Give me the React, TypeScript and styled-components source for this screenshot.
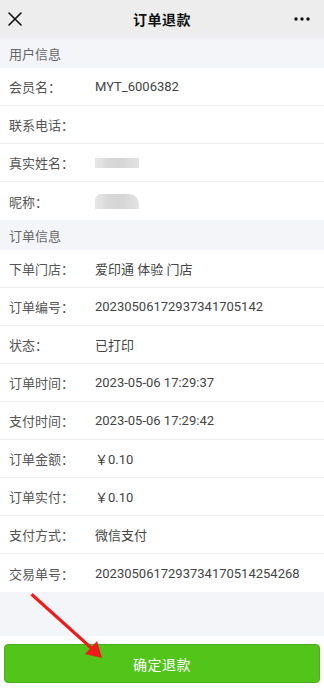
import React from "react";
import styled, { createGlobalStyle } from "styled-components";

const Global = createGlobalStyle`
  html, body { margin: 0; padding: 0; background: #ffffff; }
  body { font-family: "Noto Sans CJK SC", "Noto Sans", Roboto, sans-serif; }
  * { box-sizing: border-box; }
`;

const Page = styled.div`
  position: relative;
  width: 324px;
  height: 690px;
  display: flex;
  flex-direction: column;
  background: #fff;
  overflow: hidden;
`;

const NavBar = styled.div`
  height: 38px;
  background: #ededed;
  display: grid;
  grid-template-columns: 40px 1fr 40px;
  align-items: center;
`;

const NavIcon = styled.div<{ $align: "start" | "end" }>`
  display: flex;
  justify-content: ${(p) => (p.$align === "start" ? "flex-start" : "flex-end")};
  padding: ${(p) => (p.$align === "start" ? "0 0 0 8px" : "0 14px 0 0")};
  align-items: center;
`;

const NavTitle = styled.div`
  text-align: center;
  font-size: 14px;
  font-weight: 700;
  color: #111;
  letter-spacing: 0.5px;
`;

const SectionHeader = styled.div`
  height: 30px;
  background: #f4f5f9;
  color: #666;
  font-size: 13px;
  display: flex;
  align-items: center;
  padding-left: 9px;
`;

const Row = styled.div`
  height: 38px;
  display: flex;
  align-items: center;
  padding-left: 9px;
  font-size: 13px;
  border-bottom: 1px solid #eeeeee;
  &:last-child { border-bottom: none; }
`;

const Label = styled.span`
  width: 86px;
  color: #555;
  flex-shrink: 0;
`;

const Value = styled.span`
  color: #444;
  font-family: Roboto, "Noto Sans CJK SC", sans-serif;
`;

const Blur = styled.span<{ $tall?: boolean }>`
  display: inline-block;
  width: 44px;
  height: ${(p) => (p.$tall ? "15px" : "10px")};
  background: linear-gradient(90deg, #e4e4e4 0%, #d2d2d2 30%, #cfcfcf 60%, #dedede 100%);
  border-radius: ${(p) => (p.$tall ? "6px 10px 0 0" : "0")};
  filter: blur(0.6px);
  opacity: 0.85;
`;

const Spacer = styled.div`
  flex: 1;
  background: #f4f5f9;
`;

const Footer = styled.div`
  height: 54px;
  padding: 8px 4px 7px;
  background: #fff;
`;

const ConfirmButton = styled.button`
  width: 100%;
  height: 39px;
  border: 1px solid #4aae1c;
  border-radius: 4px;
  background: #52c41a;
  color: #fff;
  font-family: "Noto Sans CJK SC", sans-serif;
  font-size: 14px;
  letter-spacing: 0.5px;
`;

const ArrowOverlay = styled.svg`
  position: absolute;
  left: 0;
  top: 0;
  pointer-events: none;
`;

const userRows: [string, React.ReactNode][] = [
  ["会员名：", <Value>MYT_6006382</Value>],
  ["联系电话：", null],
  ["真实姓名：", <Blur />],
  ["昵称：", <Blur $tall />],
];

const orderRows: [string, string][] = [
  ["下单门店：", "爱印通 体验 门店"],
  ["订单编号：", "20230506172937341705142"],
  ["状态：", "已打印"],
  ["订单时间：", "2023-05-06 17:29:37"],
  ["支付时间：", "2023-05-06 17:29:42"],
  ["订单金额：", "￥0.10"],
  ["订单实付：", "￥0.10"],
  ["支付方式：", "微信支付"],
  ["交易单号：", "2023050617293734170514254268"],
];

const Section = styled.div`
  display: flex;
  flex-direction: column;
`;

export default function App() {
  return (
    <>
      <Global />
      <Page>
        <NavBar>
          <NavIcon $align="start">
            <svg width="14" height="14" viewBox="0 0 14 14">
              <path d="M1 1 L13 13 M13 1 L1 13" stroke="#111" strokeWidth="1.6" strokeLinecap="round" />
            </svg>
          </NavIcon>
          <NavTitle>订单退款</NavTitle>
          <NavIcon $align="end">
            <svg width="16" height="4" viewBox="0 0 16 4">
              <circle cx="2" cy="2" r="1.7" fill="#111" />
              <circle cx="8" cy="2" r="1.7" fill="#111" />
              <circle cx="14" cy="2" r="1.7" fill="#111" />
            </svg>
          </NavIcon>
        </NavBar>
        <SectionHeader>用户信息</SectionHeader>
        <Section>
          {userRows.map(([l, v]) => (
            <Row key={l}>
              <Label>{l}</Label>
              {v}
            </Row>
          ))}
        </Section>
        <SectionHeader>订单信息</SectionHeader>
        <Section>
          {orderRows.map(([l, v]) => (
            <Row key={l}>
              <Label>{l}</Label>
              <Value>{v}</Value>
            </Row>
          ))}
        </Section>
        <Spacer />
        <Footer>
          <ConfirmButton>确定退款</ConfirmButton>
        </Footer>
        <ArrowOverlay width="324" height="690" viewBox="0 0 324 690">
          <path d="M30.5 595.5 L32.5 593 L92 646.5 L90 649 Z" fill="#f01a1a" />
          <path d="M102 658 L85 654 L97 641 Z" fill="#f01a1a" />
        </ArrowOverlay>
      </Page>
    </>
  );
}
